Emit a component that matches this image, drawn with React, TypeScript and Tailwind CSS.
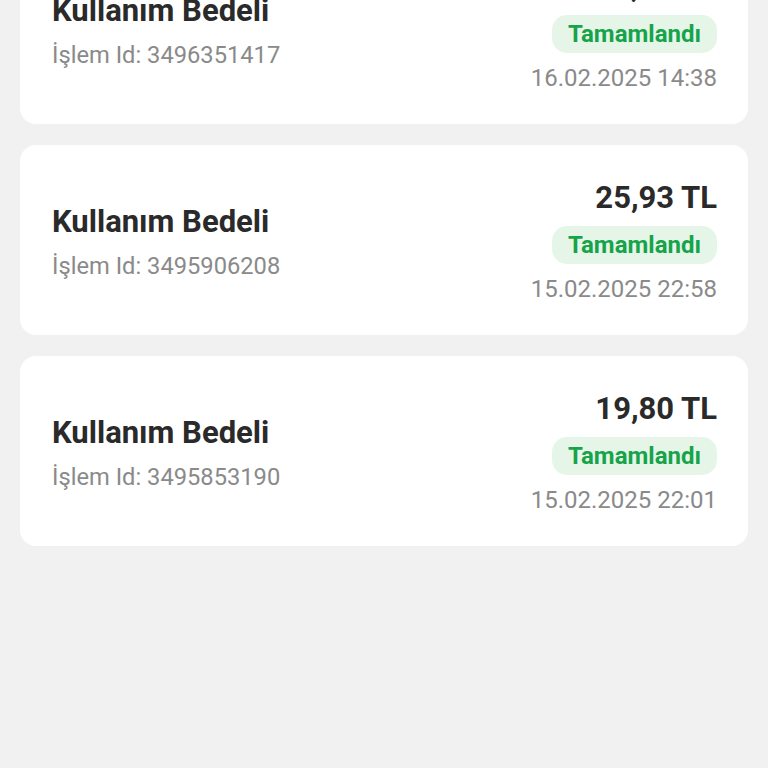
import React from "react";

const items = [
  { id: "3496351417", amount: "31,45 TL", date: "16.02.2025 14:38" },
  { id: "3495906208", amount: "25,93 TL", date: "15.02.2025 22:58" },
  { id: "3495853190", amount: "19,80 TL", date: "15.02.2025 22:01" },
];

export default function App() {
  return (
    <div className="min-h-screen bg-[#f1f1f1] overflow-hidden" style={{ fontFamily: "Roboto, 'Noto Sans', sans-serif" }}>
      {/* list is scrolled, first card partly above the top edge */}
      <div className="px-5 -mt-[66px] flex flex-col gap-[21px]">
        {items.map((it) => (
          <div key={it.id} className="bg-white rounded-[16px] h-[190px] pl-8 pr-[31px] pt-[5px] flex items-center justify-between">
            <div className="flex flex-col gap-[11px]">
              <div className="text-[31px] leading-[36px] font-bold text-[#2a2a2a]">Kullanım Bedeli</div>
              <div className="text-[23.7px] leading-[30px] text-[#8a8a8a]">İşlem Id: {it.id}</div>
            </div>
            <div className="flex flex-col items-end">
              <div className="text-[31px] leading-[34px] font-bold text-[#2a2a2a]">{it.amount}</div>
              <div className="mt-[11px] h-[38px] px-4 rounded-[15px] bg-[#e5f6e9] flex items-center text-[24px] font-bold text-[#16a349]">
                Tamamlandı
              </div>
              <div className="mt-[10px] text-[24px] leading-[30px] text-[#8a8a8a]">{it.date}</div>
            </div>
          </div>
        ))}
      </div>
    </div>
  );
}
